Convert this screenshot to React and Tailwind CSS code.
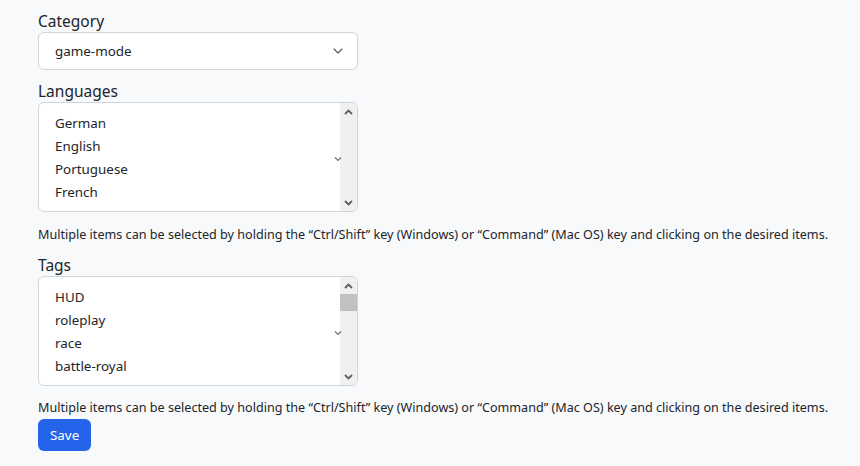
import { ChevronDown } from "lucide-react";

const languages = ["German", "English", "Portuguese", "French"];
const tags = ["HUD", "roleplay", "race", "battle-royal"];

function ScrollArrow({ up }) {
  return (
    <svg width="9" height="6" viewBox="0 0 9 6" className="text-[#606060]">
      {up ? (
        <path d="M1 5 L4.5 1.5 L8 5" fill="none" stroke="currentColor" strokeWidth="1.8" />
      ) : (
        <path d="M1 1 L4.5 4.5 L8 1" fill="none" stroke="currentColor" strokeWidth="1.8" />
      )}
    </svg>
  );
}

function MultiList({ items, thumb = false }) {
  return (
    <div className="relative flex h-[110px] w-[320px] overflow-hidden rounded-md border border-[#ced4da] bg-white">
      <ul className="flex-1 pl-4 pt-[9px] text-[13.4px] leading-[23px] text-[#212529]">
        {items.map((item) => (
          <li key={item}>{item}</li>
        ))}
      </ul>
      {/* chevron of the select background showing through */}
      <svg
        width="8"
        height="6"
        viewBox="0 0 8 6"
        className="absolute left-[295px] top-[53px] text-[#6b7280]"
      >
        <path d="M1 1.5 L4 4.5 L7 1.5" fill="none" stroke="currentColor" strokeWidth="1.2" />
      </svg>
      {/* native-looking scrollbar */}
      <div className="flex w-[17px] flex-col items-center bg-[#f0f0f0]">
        <div className="flex h-[17px] w-full items-center justify-center">
          <ScrollArrow up />
        </div>
        {thumb ? <div className="h-[17px] w-full bg-[#c1c1c1]" /> : null}
        <div className="flex-1" />
        <div className="flex h-[17px] w-full items-center justify-center">
          <ScrollArrow />
        </div>
      </div>
    </div>
  );
}

const help =
  "Multiple items can be selected by holding the \u201cCtrl/Shift\u201d key (Windows) or \u201cCommand\u201d (Mac OS) key and clicking on the desired items.";

export default function App() {
  return (
    <div
      className="min-h-[466px] w-[860px] bg-[#f8f9fb] pl-[38px] pt-[11px] text-[#212529]"
      style={{ fontFamily: '"Segoe UI", "Noto Sans", sans-serif' }}
    >
      <label className="block text-[15.5px] leading-[21px]">Category</label>
      <div className="flex h-[38px] w-[320px] items-center justify-between rounded-md border border-[#ced4da] bg-white pl-4 pr-[11px] text-[13.4px]">
        <span>game-mode</span>
        <ChevronDown size={16} strokeWidth={1.6} className="text-[#4b5563]" />
      </div>

      <label className="mt-[11px] block text-[15.5px] leading-[21px]">Languages</label>
      <MultiList items={languages} />
      <p className="mt-[14px] text-[12.6px] leading-[18px]">{help}</p>

      <label className="mt-[11px] block text-[15.5px] leading-[21px]">Tags</label>
      <MultiList items={tags} thumb />
      <p className="mt-[13px] text-[12.6px] leading-[18px]">{help}</p>

      <button className="mt-[2px] h-[32px] rounded-md bg-[#2563eb] px-[12px] text-[13.4px] text-white">
        Save
      </button>
    </div>
  );
}
